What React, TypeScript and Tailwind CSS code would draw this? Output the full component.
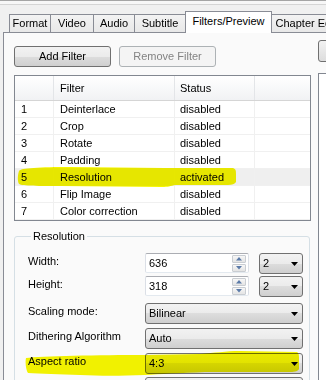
import type { ReactNode } from "react";

const tabs = [
  { label: "Format", w: "w-[42px]" },
  { label: "Video", w: "w-[44px]" },
  { label: "Audio", w: "w-[42px]" },
  { label: "Subtitle", w: "w-[52px]" },
  { label: "Filters/Preview", w: "w-[87px]", active: true },
  { label: "Chapter Editor", w: "w-[80px]" },
];

const filters = [
  ["1", "Deinterlace", "disabled"],
  ["2", "Crop", "disabled"],
  ["3", "Rotate", "disabled"],
  ["4", "Padding", "disabled"],
  ["5", "Resolution", "activated"],
  ["6", "Flip Image", "disabled"],
  ["7", "Color correction", "disabled"],
];

function Arrow() {
  return (
    <svg width="7" height="4" viewBox="0 0 7 4" className="shrink-0">
      <path d="M0 0H7L3.5 4Z" fill="#000" />
    </svg>
  );
}

function Combo({ value, className }: { value: string; className: string }) {
  return (
    <div
      className={`flex h-[21px] items-center justify-between rounded-[3px] border border-[#707070] bg-[linear-gradient(#f2f2f2_0%,#ebebeb_50%,#dddddd_50%,#cfcfcf_100%)] pl-[3px] pr-[4px] ${className}`}
    >
      <span>{value}</span>
      <Arrow />
    </div>
  );
}

function SpinBox({ value }: { value: string }) {
  return (
    <div className="flex h-[20px] w-[104px] items-center justify-between rounded-[2px] border border-[#abadb3] border-b-[#e3e9ef] border-x-[#dbdfe6] bg-white pl-[3px] pr-[2px]">
      <span>{value}</span>
      <div className="flex h-[17px] w-[14px] flex-col gap-px">
        {["M0 3.5L3 0L6 3.5Z", "M0 0H6L3 3.5Z"].map((d) => (
          <div
            key={d}
            className="flex flex-1 items-center justify-center rounded-[1px] border border-[#c9cdd2] bg-[linear-gradient(#f7f7f7,#e4e4e4)]"
          >
            <svg width="6" height="4" viewBox="0 0 6 4">
              <path d={d} fill="#5b7aa8" />
            </svg>
          </div>
        ))}
      </div>
    </div>
  );
}

function Row({ label, className, children }: { label: string; className: string; children: ReactNode }) {
  return (
    <div className={`flex items-start ${className}`}>
      <span className="w-[117px] leading-[16px]">{label}</span>
      <div className="flex gap-[10px]">{children}</div>
    </div>
  );
}

export default function App() {
  return (
    <div className="relative h-[380px] w-[326px] overflow-hidden bg-[#f0f0f0] font-['Liberation_Sans',Arial,sans-serif] text-[11px] text-black">
      <div className="h-[5px] border-y border-t-[#a5a5a5] border-b-[#d5d5d5] bg-[#f7f7f7]" />

      <div className="flex h-[27px] items-end pl-[10px]">
        {tabs.map((t) =>
          t.active ? (
            <div
              key={t.label}
              className={`relative z-10 -mb-px -ml-px flex h-[22px] shrink-0 items-center justify-center border border-b-0 border-[#898c95] bg-white pb-[2px] ${t.w}`}
            >
              {t.label}
            </div>
          ) : (
            <div
              key={t.label}
              className={`-ml-px flex h-[18px] shrink-0 items-center justify-center border border-b-0 border-[#898c95] bg-[linear-gradient(#f3f3f3,#e8e8e8)] ${t.w}`}
            >
              {t.label}
            </div>
          )
        )}
      </div>

      <div className="ml-[3px] flex h-[348px] border-l border-t border-[#898c95] bg-[#fafafa]">
        <div className="flex w-[311px] shrink-0 flex-col pl-[10px]">
          <div className="mt-[13px] flex gap-[8px]">
            <button className="h-[21px] w-[97px] rounded-[3px] border border-[#707070] bg-[linear-gradient(#f2f2f2_0%,#ebebeb_50%,#dddddd_50%,#cfcfcf_100%)]">
              Add Filter
            </button>
            <button className="h-[21px] w-[97px] rounded-[3px] border border-[#adb2b5] bg-[#f4f4f4] text-[#838383]">
              Remove Filter
            </button>
          </div>

          <div className="mt-[8px] h-[149px] w-[297px] border border-[#828790] bg-white">
            <div className="flex h-[25px] border-b border-[#d5d5d5] bg-[linear-gradient(#ffffff,#f1f2f4)]">
              <div className="w-[39px] border-r border-[#e3e5e8]" />
              <div className="flex w-[121px] items-center border-r border-[#e3e5e8] pl-[6px]">Filter</div>
              <div className="flex w-[80px] items-center border-r border-[#e3e5e8] pl-[5px]">Status</div>
              <div className="flex-1" />
            </div>
            {filters.map(([n, name, status]) => (
              <div
                key={n}
                className={`flex h-[17px] border-b border-[#f0f0f0] ${n === "5" ? "bg-[#efefef]" : ""}`}
              >
                <div className="flex w-[39px] items-center border-r border-[#f0f0f0] pl-[6px]">{n}</div>
                <div className="flex w-[121px] items-center border-r border-[#f0f0f0] pl-[6px]">{name}</div>
                <div className="flex w-[80px] items-center border-r border-[#f0f0f0] pl-[5px]">{status}</div>
                <div className="flex-1" />
              </div>
            ))}
          </div>

          <fieldset className="mt-[8px] h-[200px] w-[296px] rounded-[3px] border border-[#d5dfe5] pl-[13px]">
            <legend className="ml-[3px] px-[2px] leading-[14px]">Resolution</legend>
            <Row label="Width:" className="mt-[10px]">
              <SpinBox value="636" />
              <Combo value="2" className="w-[44px]" />
            </Row>
            <Row label="Height:" className="mt-[2px]">
              <SpinBox value="318" />
              <Combo value="2" className="w-[44px]" />
            </Row>
            <Row label="Scaling mode:" className="mt-[6px]">
              <Combo value="Bilinear" className="w-[158px]" />
            </Row>
            <Row label="Dithering Algorithm" className="mt-[4px]">
              <Combo value="Auto" className="w-[158px]" />
            </Row>
            <Row label="Aspect ratio" className="mt-[4px]">
              <Combo value="4:3" className="w-[158px]" />
            </Row>
            <Row label="" className="mt-[3px]">
              <Combo value="" className="w-[158px]" />
            </Row>
          </fieldset>
        </div>

        <div className="ml-[3px] flex flex-1 flex-col">
          <div className="mt-[7px] h-[22px] w-[40px] rounded-[3px] border border-[#707070] bg-[linear-gradient(#f2f2f2,#dddddd)]" />
          <div className="mt-[11px] flex-1 border-l border-t border-[#828790] bg-white" />
        </div>
      </div>

      <svg
        className="pointer-events-none absolute left-0 top-0 mix-blend-multiply"
        width="326"
        height="380"
        viewBox="0 0 326 380"
      >
        <path
          d="M19 171 C20 168 40 167 70 167 L165 168 L233 168 C236 169 236 171 236 174 L236 182 C235 184 232 185 228 185 L176 185 C170 186 168 187 162 187 L60 186 C40 186 22 186 19 184 C17 180 18 174 19 171 Z"
          fill="#f6f600"
        />
        <path
          d="M26 358 C40 356 100 355 145 355 L200 354 C215 353 225 351 240 351 L297 352 C299 353 299 356 299 359 L299 369 C298 371 296 372 290 372 L205 372 C180 373 160 374 145 375 C120 376 100 376 80 375 C60 374 40 374 28 373 C26 370 25 362 26 358 Z"
          fill="#f6f600"
        />
      </svg>
    </div>
  );
}
